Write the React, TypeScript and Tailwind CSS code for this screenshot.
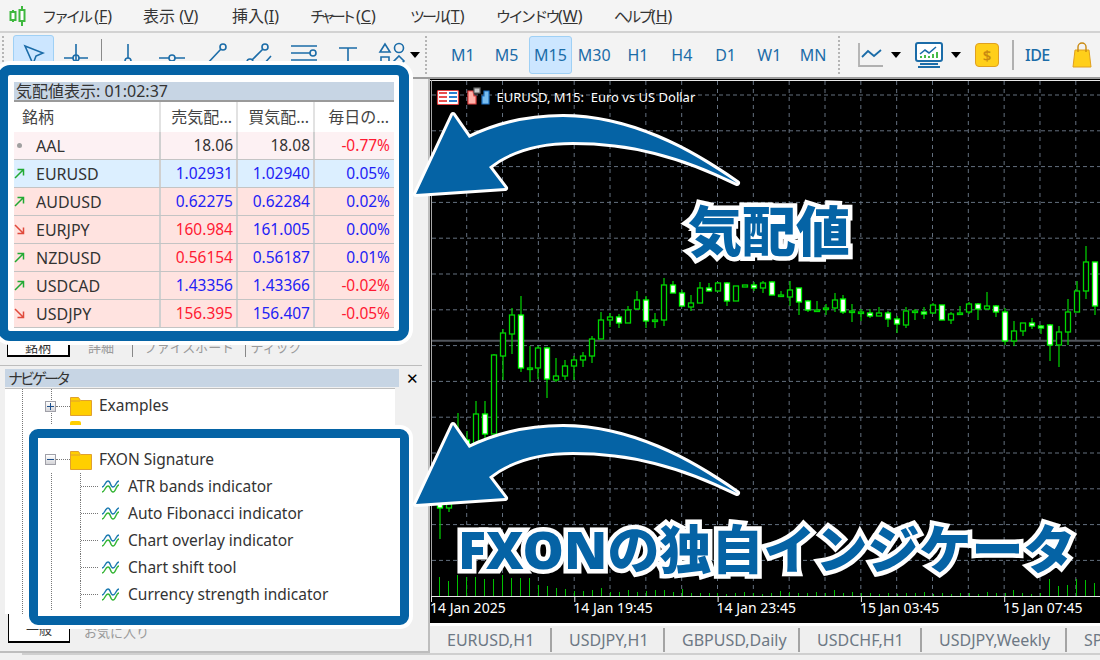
import type { ReactNode } from "react";

const BLUE = "#0563a5";
const menus = [
  { kana: "ファイル", rest: " (", key: "F", w: "w-[101px]", kanaC: "text-[15px] tracking-[-3px]" },
  { kana: "表示", rest: " (", key: "V", w: "w-[89px]", kanaC: "" },
  { kana: "挿入", rest: "(", key: "I", w: "w-[78px]", kanaC: "" },
  { kana: "チャート", rest: " (", key: "C", w: "w-[100px]", kanaC: "text-[15px] tracking-[-4.5px]" },
  { kana: "ツール", rest: "(", key: "T", w: "w-[86px]", kanaC: "text-[15px] tracking-[-3px]" },
  { kana: "ウインドウ", rest: "(", key: "W", w: "w-[118px]", kanaC: "text-[15px] tracking-[-2.6px]" },
  { kana: "ヘルプ", rest: "(", key: "H", w: "w-[70px]", kanaC: "text-[15px] tracking-[-2.7px]" },
];
const frames = ["M1", "M5", "M15", "M30", "H1", "H4", "D1", "W1", "MN"];
const tabs = [
  { label: "EURUSD,H1", w: "w-[122px]" },
  { label: "USDJPY,H1", w: "w-[113px]" },
  { label: "GBPUSD,Daily", w: "w-[135px]" },
  { label: "USDCHF,H1", w: "w-[122px]" },
  { label: "USDJPY,Weekly", w: "w-[145px]" },
  { label: "SP", w: "w-[30px]" },
];
const BLUE_T = "text-[#2222f5]";
const RED_T = "text-[#ff1a33]";
const rows = [
  { dir: "flat", sym: "AAL", bid: "18.06", ask: "18.08", pct: "-0.77%", bg: "bg-[#fdf1f3]", bidC: "text-[#333]", askC: "text-[#333]", pctC: RED_T },
  { dir: "up", sym: "EURUSD", bid: "1.02931", ask: "1.02940", pct: "0.05%", bg: "bg-[#dcefff]", bidC: BLUE_T, askC: BLUE_T, pctC: BLUE_T },
  { dir: "up", sym: "AUDUSD", bid: "0.62275", ask: "0.62284", pct: "0.02%", bg: "bg-[#ffe3e0]", bidC: BLUE_T, askC: BLUE_T, pctC: BLUE_T },
  { dir: "down", sym: "EURJPY", bid: "160.984", ask: "161.005", pct: "0.00%", bg: "bg-[#ffe3e0]", bidC: RED_T, askC: BLUE_T, pctC: BLUE_T },
  { dir: "up", sym: "NZDUSD", bid: "0.56154", ask: "0.56187", pct: "0.01%", bg: "bg-[#ffe3e0]", bidC: RED_T, askC: BLUE_T, pctC: BLUE_T },
  { dir: "up", sym: "USDCAD", bid: "1.43356", ask: "1.43366", pct: "-0.02%", bg: "bg-[#ffe3e0]", bidC: BLUE_T, askC: BLUE_T, pctC: RED_T },
  { dir: "down", sym: "USDJPY", bid: "156.395", ask: "156.407", pct: "-0.05%", bg: "bg-[#ffe3e0]", bidC: RED_T, askC: BLUE_T, pctC: RED_T },
];
const indicators = ["ATR bands indicator", "Auto Fibonacci indicator", "Chart overlay indicator", "Chart shift tool", "Currency strength indicator"];

// high, body top, body bottom, low, filled — screen y values
const candles: [number, number, number, number, number][] = [
  [470, 505, 509, 540, 1], [500, 505, 509, 513, 0], [414, 440, 470, 480, 0], [432, 441, 445, 470, 1],
  [402, 415, 445, 450, 0], [402, 415, 435, 440, 1], [355, 356, 435, 440, 0], [330, 334, 357, 381, 0],
  [309, 316, 335, 355, 0], [297, 316, 369, 373, 1], [347, 369, 370, 383, 0], [347, 349, 369, 380, 0],
  [348, 349, 380, 399, 1], [359, 377, 381, 383, 0], [361, 367, 377, 381, 0], [357, 361, 367, 381, 0],
  [353, 357, 361, 368, 0], [337, 340, 357, 364, 0], [313, 321, 340, 340, 0], [314, 318, 321, 328, 0],
  [315, 318, 324, 329, 1], [307, 311, 324, 324, 0], [292, 301, 310, 311, 0], [297, 301, 322, 329, 1],
  [314, 321, 322, 329, 0], [279, 286, 321, 327, 0], [282, 286, 294, 294, 1], [291, 294, 307, 308, 1],
  [296, 304, 308, 312, 0], [283, 289, 304, 304, 0], [284, 289, 292, 292, 1], [283, 284, 292, 292, 0],
  [283, 284, 302, 307, 1], [287, 287, 302, 302, 0], [287, 286, 288, 288, 0], [283, 286, 289, 292, 1],
  [282, 284, 289, 294, 0], [282, 283, 296, 296, 1], [292, 296, 297, 297, 0], [282, 291, 298, 307, 0],
  [289, 289, 303, 316, 1], [301, 302, 311, 313, 1], [302, 311, 312, 312, 0], [305, 309, 310, 316, 0],
  [294, 301, 309, 313, 0], [296, 300, 313, 315, 1], [305, 312, 313, 323, 0], [310, 313, 314, 322, 0],
  [310, 314, 317, 319, 1], [308, 314, 317, 317, 0], [312, 314, 320, 328, 1], [317, 320, 325, 334, 1],
  [308, 312, 326, 329, 0], [310, 312, 313, 321, 0], [308, 313, 315, 320, 1], [304, 306, 314, 315, 0],
  [306, 306, 321, 321, 1], [313, 315, 321, 325, 0], [307, 314, 315, 316, 0], [303, 305, 313, 315, 0],
  [304, 305, 310, 321, 1], [293, 307, 310, 310, 0], [306, 307, 313, 318, 1], [309, 313, 342, 346, 1],
  [322, 332, 342, 347, 0], [324, 324, 332, 337, 0], [319, 324, 327, 330, 1], [326, 327, 329, 335, 1],
  [325, 326, 346, 362, 1], [327, 333, 346, 368, 0], [300, 313, 333, 346, 0], [282, 292, 313, 313, 0],
  [247, 263, 292, 300, 0], [263, 263, 307, 316, 1],
];
const volumes = [19, 15, 21, 19, 19, 17, 17, 21, 18, 18, 18, 11, 10, 8, 7, 5, 5, 6, 8, 4, 4, 6, 4, 5, 6, 6, 4, 7, 3, 3, 3, 3, 2, 3, 4, 3, 2, 3, 5, 4, 3, 3, 4, 3, 6, 3, 4, 3, 3, 2, 3, 2, 3, 3, 4, 2, 3, 2, 3, 3, 2, 4, 3, 3, 6, 3, 2, 3, 17, 10, 11, 17, 16, 13];

const gridX = Array.from({ length: 19 }, (_, i) => 466.7 + i * 35.83);
const gridY = Array.from({ length: 14 }, (_, i) => 96 + i * 35.8);
const stamps = ["14 Jan 2025", "14 Jan 19:45", "14 Jan 23:45", "15 Jan 03:45", "15 Jan 07:45"];

function Grip() {
  return <div className="h-[38px] w-[3px] border-l-2 border-dotted border-[#b5b5b5]" />;
}

function Tool({ children }: { children: ReactNode }) {
  return (
    <div className="flex h-[38px] w-[44px] items-center justify-center">
      <svg viewBox="0 0 28 28" className="h-[28px] w-[28px]" fill="none" stroke="#1b6ca8" strokeWidth="1.6">
        {children}
      </svg>
    </div>
  );
}

function Caret() {
  return <div className="h-0 w-0 border-x-[5px] border-t-[6px] border-x-transparent border-t-black" />;
}

function Folder() {
  return (
    <svg viewBox="0 0 22 20" className="h-[20px] w-[22px] shrink-0">
      <path d="M.5 19.5V1.5h8l2 3h11v15z" fill="#ffcf00" stroke="#e0a030" />
      <path d="M1 5h9" stroke="#e0a030" />
    </svg>
  );
}

function TreeBox({ open }: { open: boolean }) {
  return (
    <span className="relative flex h-[11px] w-[11px] shrink-0 items-center justify-center border border-[#a0a0a8] bg-gradient-to-b from-white to-[#d4d4d8]">
      <span className="h-px w-[7px] bg-[#1c4f8c]" />
      {!open && <span className="absolute h-[7px] w-px bg-[#1c4f8c]" />}
    </span>
  );
}

function IndicatorIcon() {
  return (
    <svg viewBox="0 0 19 16" className="ml-[3px] h-[16px] w-[19px] shrink-0" fill="none" strokeWidth="1.4">
      <path d="M1 9c3 0 3-6 6-6s2 6 5 6 3-6 6-6" stroke="#1c7ab0" transform="translate(0 -1)" />
      <path d="M1 13c3 0 3-6 6-6s2 6 5 6 3-7 6-7" stroke="#35b535" />
    </svg>
  );
}

function Chart() {
  return (
    <svg viewBox="430 80 670 544" className="block h-[544px] w-[670px] bg-black">
      <path d="M430 81.5H1100" stroke="#e8e8e8" />
      <path d="M431.5 81V597" stroke="#a8a8a8" />
      {gridX.map((x) => (
        <path key={x} d={`M${x} 82V597`} stroke="#64707f" strokeDasharray="4 4" />
      ))}
      {gridY.map((y) => (
        <path key={y} d={`M432 ${y}H1100`} stroke="#64707f" strokeDasharray="4 3" />
      ))}
      <path d="M432 341.7H1100" stroke="#50555c" strokeWidth="2" />
      {volumes.map((h, i) => {
        const x = Math.round(439.4 + i * 8.97) + 0.5;
        return <path key={i} d={`M${x} 597V${597 - h}`} stroke="#00c000" />;
      })}
      {candles.map(([high, top, bot, low, filled], i) => {
        const x = Math.round(475.7 + (i - 4) * 8.97);
        return (
          <g key={i}>
            <path d={`M${x} ${high}V${low}`} stroke="#00c800" strokeWidth="1.3" />
            <rect
              x={x - 2.5}
              y={top}
              width={5}
              height={Math.max(bot - top, 1.5)}
              fill={filled ? "#fff" : "#000"}
              stroke={filled ? "#00ff00" : "#00d800"}
              strokeWidth="1.3"
            />
          </g>
        );
      })}
      <path d="M431 597.5H1100" stroke="#e8e8e8" />
      {stamps.map((s, i) => {
        const x = 431 + i * 143.3;
        return (
          <g key={s}>
            <path d={`M${x + 0.5} 597V603`} stroke="#e8e8e8" />
            <text x={x - 1} y={614} fill="#fff" fontSize="14">
              {s}
            </text>
          </g>
        );
      })}
      <g strokeWidth="1.2">
        <rect x="437.5" y="91.5" width="21" height="14" rx="1" fill="#fff" stroke="#e04040" />
        <path d="M439 94h8M439 98h8M439 102h8" stroke="#e85050" strokeWidth="2" />
        <path d="M449 94h8M449 98h8M449 102h8" stroke="#2a7fd0" strokeWidth="2" />
        <path d="M468 92h5l1 5h2v8h-8z" fill="#ffb0a8" stroke="#e04040" />
        <path d="M482 97h2v-5h5v13h-7z" fill="#78bdf0" stroke="#1c6fc0" />
        <rect x="474" y="89" width="6" height="5" fill="#ccc" stroke="#666" />
      </g>
      <text x="496.5" y="103" fill="#fff" fontSize="13" className="whitespace-pre">
        EURUSD, M15:  Euro vs US Dollar
      </text>
    </svg>
  );
}

function MarketRow({ row }: { row: (typeof rows)[number] }) {
  return (
    <div className={`grid h-[28px] grid-cols-[146.5px_77.5px_77px_79px] items-center border-b border-[#c4c4c4] text-[15.5px] ${row.bg}`}>
      <div className="flex h-full items-center border-r-2 border-[#d0d0d0]">
        <svg viewBox="0 0 11 11" className="h-[11px] w-[11px] shrink-0" fill="none" strokeWidth="1.5">
          {row.dir === "flat" && <circle cx="5.5" cy="5.5" r="2.5" fill="#a0a0a0" />}
          {row.dir === "up" && <path d="M1 10 9.5 1.5M3.5 1.5h6v6" stroke="#22aa33" />}
          {row.dir === "down" && <path d="M1 1l8.5 8.5M3.5 9.5h6v-6" stroke="#e04a3c" />}
        </svg>
        <span className="ml-[11px] text-[16px] text-[#333]">{row.sym}</span>
      </div>
      <div className={`flex h-full items-center justify-end border-r-2 border-[#d0d0d0] pr-[3px] ${row.bidC}`}>{row.bid}</div>
      <div className={`flex h-full items-center justify-end border-r-2 border-[#d0d0d0] pr-[3px] ${row.askC}`}>{row.ask}</div>
      <div className={`pr-[4px] text-right ${row.pctC}`}>{row.pct}</div>
    </div>
  );
}

export default function App() {
  return (
    <div className="relative h-[660px] w-[1100px] overflow-hidden bg-[#f0f0f0] font-['Noto_Sans','Noto_Sans_CJK_JP',sans-serif] text-[#333]">
      {/* menu */}
      <header className="flex h-[33px] items-center border-b-2 border-[#d2d2d2] bg-[#f4f4f4] text-[16px]">
        <svg viewBox="0 0 18 22" className="ml-[9px] mr-[15px] h-[22px] w-[18px]" fill="none" stroke="#3fb83f" strokeWidth="2">
          <path d="M4 5v12M13 1v20" />
          <rect x="1.5" y="7" width="5" height="8" fill="#fff" />
          <rect x="10.5" y="5" width="5" height="11" fill="#fff" />
        </svg>
        {menus.map((m) => (
          <span key={m.key} className={`${m.w} whitespace-pre`}>
            <span className={m.kanaC}>{m.kana}</span>
            {m.rest}
            <span className="underline">{m.key}</span>)
          </span>
        ))}
      </header>

      {/* toolbar */}
      <div className="flex h-[46px] items-center border-b-2 border-[#9c9c9c] bg-[#f3f3f3]">
        <div className="ml-[2px] mr-[8px]">
          <Grip />
        </div>
        <div className="flex h-[40px] w-[41px] items-center justify-center rounded-[3px] border border-[#9fd0f5] bg-[#cce6ff]">
          <svg viewBox="0 0 22 22" className="h-[22px] w-[22px]" fill="none" stroke="#1b6ca8" strokeWidth="1.6">
            <path d="M2 2l18 7-7 3-3 8z" />
          </svg>
        </div>
        <Tool>
          <path d="M14 3v17M2 17h9M17 17h9" />
          <circle cx="14" cy="17" r="3" />
        </Tool>
        <div className="ml-[3px] mr-[4px] h-[32px] w-px bg-[#8a8a8a]" />
        <Tool>
          <path d="M14 3v14" />
          <circle cx="14" cy="20" r="3" />
        </Tool>
        <Tool>
          <path d="M1 17h10M17 17h10" />
          <circle cx="14" cy="17" r="3" />
        </Tool>
        <Tool>
          <path d="M4 24 19 8" />
          <circle cx="21" cy="6" r="3" />
        </Tool>
        <Tool>
          <path d="M6 19 17 8M17 24l8-9" />
          <circle cx="19" cy="6" r="3" />
          <circle cx="4" cy="21" r="3" />
        </Tool>
        <Tool>
          <path d="M1 5h26M1 12h19M1 19h26" />
          <circle cx="23" cy="12" r="3" />
        </Tool>
        <Tool>
          <path d="M5 7h18M14 7v18" />
        </Tool>
        <Tool>
          <path d="M7 3 2 11h10z" />
          <circle cx="21" cy="7" r="4.5" />
          <path d="M3 16h8v8H3z" />
          <path d="M21 15l5 5-5 5-5-5z" />
        </Tool>
        <div className="ml-[-4px]">
          <Caret />
        </div>
        <div className="ml-[5px]">
          <Grip />
        </div>
        <div className="ml-[13px] flex w-[394px]">
          {frames.map((f) => (
            <div
              key={f}
              className={`flex h-[38px] flex-1 items-center justify-center rounded-[3px] border text-[16px] text-[#1b6ca8] ${
                f === "M15" ? "border-[#9fd0f5] bg-[#cce6ff]" : "border-transparent"
              }`}
            >
              {f}
            </div>
          ))}
        </div>
        <div className="ml-[3px]">
          <Grip />
        </div>
        <svg viewBox="0 0 26 26" className="ml-[16px] h-[26px] w-[26px]" fill="none" strokeWidth="1.8">
          <path d="M2 1v23h24" stroke="#b0b0b0" />
          <path d="M5 15l6-6 6 5 7-6" stroke="#1b6ca8" />
        </svg>
        <div className="ml-[8px]">
          <Caret />
        </div>
        <svg viewBox="0 0 28 28" className="ml-[14px] h-[28px] w-[28px]" fill="none">
          <rect x="1" y="2" width="26" height="18" rx="2" fill="#fff" stroke="#1b6ca8" strokeWidth="2" />
          <path d="M5 13l5-4 4 3 7-6" stroke="#1b6ca8" strokeWidth="1.6" />
          <path d="M6 17v-2M10 17v-3M14 17v-2M18 17v-4M22 17v-6" stroke="#35b535" strokeWidth="1.8" />
          <path d="M5 23h18M3 26h22" stroke="#1b6ca8" strokeWidth="2" />
        </svg>
        <div className="ml-[8px]">
          <Caret />
        </div>
        <div className="ml-[14px] flex h-[24px] w-[24px] items-center justify-center rounded-[4px] border border-[#e0a020] bg-[#ffcf1a] text-[15px] font-semibold text-[#c98a10]">
          $
        </div>
        <div className="ml-[13px] h-[30px] w-[2px] bg-[#b0b0b0]" />
        <span className="ml-[11px] w-[24px] text-[16px] font-medium tracking-[-0.5px] text-[#1b6ca8]">IDE</span>
        <svg viewBox="0 0 20 26" className="ml-[23px] h-[26px] w-[20px]" fill="none">
          <path d="M3 8h14l2 17H1z" fill="#ffcf1a" stroke="#e0a020" />
          <path d="M6 10V5a4 4 0 0 1 8 0v5" stroke="#c98a10" strokeWidth="1.4" />
        </svg>
      </div>

      <div className="flex h-[544px]">
        {/* left side: market watch and navigator */}
        <aside className="flex h-[574px] w-[430px] shrink-0 flex-col border-b-2 border-r-2 border-[#bdbdbd] pr-[6px]">
          <section className="flex h-[287px] flex-col justify-end border-b border-[#bdbdbd] pb-[8px] pl-[7px]">
            <div className="flex items-end text-[13px] text-[#9a9a9a]">
              <span className="flex h-[17px] w-[63px] items-center justify-center border border-t-0 border-r-2 border-b-2 border-black bg-white text-[#333]">銘柄</span>
              <span className="w-[62px] text-center">詳細</span>
              <span className="w-[114px] border-x border-[#888] text-center">ファイスボード</span>
              <span className="w-[60px] text-center">ティック</span>
            </div>
          </section>
          <section className="flex flex-1 flex-col pt-[3px]">
            <div className="flex items-center pl-[5px]">
              <div className="flex h-[18px] w-[394px] items-center bg-[#c7d5e4] pl-[3px] text-[15px] tracking-[-3px]">ナビゲータ</div>
              <span className="ml-[7px] text-[15px] leading-none text-black">✕</span>
            </div>
            <div className="ml-[5px] mr-[27px] mt-[1px] h-[226px] border-t border-[#bdbdbd] bg-white pl-[17px]">
              <div className="h-full border-l border-dotted border-[#777] pl-[28px]">
                <div className="h-full border-l border-dotted border-[#777]">
                  <div className="ml-[-7px] flex h-[32px] items-center pt-[2px]">
                    <TreeBox open={false} />
                    <span className="w-[14px] border-t border-dotted border-[#777]" />
                    <Folder />
                    <span className="ml-[7px] text-[15.5px]">Examples</span>
                  </div>
                  <div className="ml-[18px] h-[4px] w-[11px] rounded-t-[2px] bg-[#ffcf00]" />
                </div>
              </div>
            </div>
            <div className="flex items-start pl-[8px] text-[13px] text-[#9a9a9a]">
              <span className="flex h-[29px] w-[62px] items-end justify-center border-x border-b-2 border-black bg-white pb-[2px] text-[#333]">一般</span>
              <span className="ml-[14px] mt-[9px]">お気に入り</span>
            </div>
          </section>
        </aside>

        {/* chart */}
        <Chart />
      </div>

      {/* bottom tabs */}
      <div className="ml-[430px] flex h-[30px] items-center border-t-[3px] border-white bg-[#efefef] text-[16px] text-[#6d7884]">
        {tabs.map((t) => (
          <div key={t.label} className={`${t.w} shrink-0 border-r-2 border-[#a4a4a4] pl-[17px] last:border-r-0`}>
            {t.label}
          </div>
        ))}
      </div>
      <div className="ml-[22px] border-t-2 border-[#cfcfcf]" />

      {/* highlight over the market watch */}
      <div className="absolute left-[-2px] top-[65px] h-[276px] w-[411px] rounded-[12px] border-[10px] border-[#0563a5] bg-white pl-[6px] pr-[5px] pt-[7px] shadow-[0_0_0_4px_#fff]">
        <div className="flex h-[20px] items-center border-b-2 border-[#9a9a9a] bg-[#c7d5e4] pl-[2px] text-[16px]">気配値表示: 01:02:37</div>
        <div className="grid h-[30px] grid-cols-[146.5px_77.5px_77px_79px] items-center text-[16px] text-[#444]">
          <div className="flex h-full items-center border-r-2 border-[#e2e2e2] pl-[8px]">銘柄</div>
          <div className="flex h-full items-center justify-end border-r-2 border-[#e2e2e2] pr-[4px]">売気配...</div>
          <div className="flex h-full items-center justify-end border-r-2 border-[#e2e2e2] pr-[4px]">買気配...</div>
          <div className="pr-[5px] text-right">毎日の...</div>
        </div>
        {rows.map((r) => (
          <MarketRow key={r.sym} row={r} />
        ))}
      </div>

      {/* highlight over the navigator */}
      <div className="absolute left-[29px] top-[429px] h-[196px] w-[380px] rounded-[9px] border-[9px] border-[#0563a5] bg-white pl-[7px] pt-[8px] shadow-[0_0_0_4px_#fff]">
        <div className="flex h-[27px] items-center">
          <TreeBox open />
          <span className="w-[14px] border-t border-dotted border-[#777]" />
          <Folder />
          <span className="ml-[7px] text-[15.5px]">FXON Signature</span>
        </div>
        <div className="ml-[6px] h-[137px] border-l border-dotted border-[#777] pl-[28px]">
          {indicators.map((name) => (
            <div key={name} className="flex h-[27px] items-center border-l border-dotted border-[#777]">
              <span className="w-[17px] border-t border-dotted border-[#777]" />
              <IndicatorIcon />
              <span className="ml-[8px] text-[15.5px]">{name}</span>
            </div>
          ))}
        </div>
      </div>

      {/* callout arrows */}
      <svg viewBox="0 0 1100 660" className="pointer-events-none absolute inset-0 h-[660px] w-[1100px]">
        {[0, 310].map((dy) => (
          <path
            key={dy}
            transform={`translate(0 ${dy})`}
            d="M416 194 453 115 469 138Q512 117 563 117C630 117 690 150 737 183 680 155 630 142 573 142 540 142 510 150 489 167L505 188Z"
            fill={BLUE}
            stroke="#fff"
            strokeWidth="6"
            strokeLinejoin="round"
            paintOrder="stroke"
          />
        ))}
      </svg>

      {/* callout labels */}
      <div className="absolute left-[688px] top-[195px] text-[54px] font-black leading-[72px] text-[#0563a5] [-webkit-text-stroke:9px_white] [paint-order:stroke_fill]">
        気配値
      </div>
      <div className="absolute left-[458px] top-[513px] whitespace-nowrap text-[52px] font-black leading-[72px] text-[#0563a5] [-webkit-text-stroke:9px_white] [paint-order:stroke_fill]">
        FXONの独自インジケータ
      </div>
    </div>
  );
}
